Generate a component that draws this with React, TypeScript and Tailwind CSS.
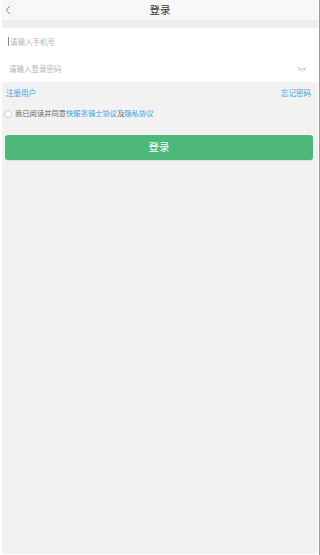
import React from 'react';

const font = { fontFamily: '"Noto Sans CJK SC", "Noto Sans", sans-serif' };

function EyeClosed() {
  return (
    <svg width="10" height="6" viewBox="0 0 10 6" fill="none" stroke="#b8b8b8" strokeWidth="0.8" strokeLinecap="round">
      <path d="M1 1.5 Q5 5 9 1.5" />
      <path d="M2.6 3 L2 4.4" />
      <path d="M5 3.7 L5 5.2" />
      <path d="M7.4 3 L8 4.4" />
    </svg>
  );
}

export default function App() {
  return (
    <div className="w-[320px] h-[555px] bg-white pl-[2px] pb-[1px] pr-[1px] border-r border-[#9a9a9a]" style={font}>
      <div className="h-full flex flex-col bg-[#f2f2f2]">
        <header className="relative h-[20px] bg-[#f8f8f8] flex items-center justify-center">
          <svg className="absolute left-[3px] top-[5px]" width="6" height="10" viewBox="0 0 6 10" fill="none" stroke="#888" strokeWidth="1">
            <path d="M5 1 L1.2 5 L5 9" />
          </svg>
          <span className="text-[10.5px] leading-none text-[#333]">登录</span>
        </header>
        <div className="h-[8px] bg-[#eeeeee]" />
        <div className="bg-white h-[54px] flex flex-col">
          <div className="h-[27px] flex items-center pl-[6px]">
            <span className="w-px h-[9px] bg-[#888] mr-px" />
            <span className="text-[7.5px] leading-none text-[#b5b5b5]">请输入手机号</span>
          </div>
          <div className="h-[27px] flex items-center justify-between pl-[7px] pr-[11px]">
            <span className="text-[7.5px] leading-none text-[#b5b5b5]">请输入登录密码</span>
            <EyeClosed />
          </div>
        </div>
        <div className="flex justify-between items-center pl-[4px] pr-[7px] mt-[6px] h-[10px]">
          <span className="text-[7.5px] leading-none text-[#3a9fdf]">注册用户</span>
          <span className="text-[7.5px] leading-none text-[#3a9fdf]">忘记密码</span>
        </div>
        <div className="flex items-center px-[2px] mt-[11px] h-[10px]">
          <span className="w-[8px] h-[8px] rounded-full border border-[#cfcfcf] bg-white mr-[3px]" />
          <span className="text-[7.3px] leading-none text-[#666]">
            我已阅读并同意<span className="text-[#3a9fdf]">快服务骑士协议</span>及<span className="text-[#3a9fdf]">隐私协议</span>
          </span>
        </div>
        <button className="ml-[3px] mr-[5px] mt-[16px] h-[25px] rounded-[3px] bg-[#4db87a] text-white text-[10.5px] leading-none flex items-center justify-center shadow-[0_1px_1px_rgba(0,0,0,0.08)]" style={font}>
          登录
        </button>
      </div>
    </div>
  );
}
